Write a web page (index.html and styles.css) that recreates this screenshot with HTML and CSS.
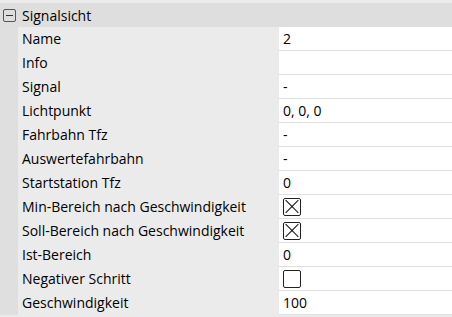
FILE: index.html
```html
<!DOCTYPE html>
<html lang="de">
<head>
    <meta charset="UTF-8">
    <title>Signalsicht</title>
    <link rel="stylesheet" href="styles.css">
</head>
<body>
    <div class="grid">
        <div class="category">
            <span class="toggle"></span>
            <span class="category-name">Signalsicht</span>
        </div>
        <div class="rows">
            <div class="row"><div class="label">Name</div><div class="value">2</div></div>
            <div class="row"><div class="label">Info</div><div class="value"></div></div>
            <div class="row"><div class="label">Signal</div><div class="value">-</div></div>
            <div class="row"><div class="label">Lichtpunkt</div><div class="value">0, 0, 0</div></div>
            <div class="row"><div class="label">Fahrbahn Tfz</div><div class="value">-</div></div>
            <div class="row"><div class="label">Auswertefahrbahn</div><div class="value">-</div></div>
            <div class="row"><div class="label">Startstation Tfz</div><div class="value">0</div></div>
            <div class="row"><div class="label">Min-Bereich nach Geschwindigkeit</div><div class="value"><span class="check checked"></span></div></div>
            <div class="row"><div class="label">Soll-Bereich nach Geschwindigkeit</div><div class="value"><span class="check checked"></span></div></div>
            <div class="row"><div class="label">Ist-Bereich</div><div class="value">0</div></div>
            <div class="row"><div class="label">Negativer Schritt</div><div class="value"><span class="check"></span></div></div>
            <div class="row"><div class="label">Geschwindigkeit</div><div class="value">100</div></div>
        </div>
    </div>
</body>
</html>
```

FILE: styles.css
```css
body {
    margin: 0;
    background-color: #ebebeb;
    font-family: "Open Sans", "Noto Sans", sans-serif;
    font-size: 14px;
    color: #000;
}
.grid {
    padding-top: 3px;
}
.category {
    height: 24px;
    background-color: #dedede;
    display: flex;
    align-items: center;
}
.toggle {
    width: 13px;
    height: 13px;
    border: 1px solid #555;
    border-radius: 2px;
    margin: 0 5px 0 3px;
    position: relative;
    box-sizing: border-box;
}
.toggle::after {
    content: "";
    position: absolute;
    left: 2px;
    right: 2px;
    top: 5px;
    height: 1px;
    background: #333;
}
.category-name {
    padding-left: 1px;
}
.rows {
    border-left: 18px solid #dfdfdf;
}
.row {
    display: flex;
    height: 24px;
}
.label {
    width: 261px;
    padding-left: 4px;
    box-sizing: border-box;
    background-color: #ebebeb;
    line-height: 23px;
    white-space: nowrap;
}
.value {
    flex: 1;
    background-color: #fff;
    border-bottom: 1px solid #e0e0e0;
    line-height: 23px;
    padding-left: 4px;
    display: flex;
    align-items: center;
}
.check {
    width: 18px;
    height: 18px;
    border: 1px solid #222;
    border-radius: 2px;
    box-sizing: border-box;
    position: relative;
}
.checked::before,
.checked::after {
    content: "";
    position: absolute;
    left: -1px;
    top: 7px;
    width: 18px;
    height: 1px;
    background: #111;
    transform: rotate(45deg);
}
.checked::after {
    transform: rotate(-45deg);
}
```
